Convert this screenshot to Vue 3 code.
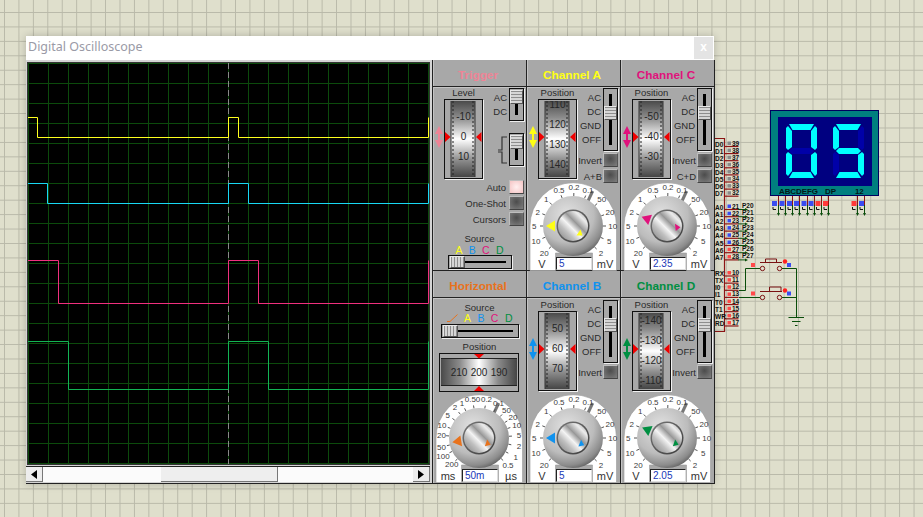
<script setup>
// dial scales, positions are measured from the top left of the dial
const voltScale = [
  ['20', 15.3, 70], ['10', 7, 58], ['5', 5.3, 43], ['2', 8.7, 29], ['1', 17.3, 16],
  ['0.5', 30, 7], ['0.2', 45, 4.3], ['0.1', 59, 7], ['50', 72.7, 16.3], ['20', 81, 29.7],
  ['10', 83.7, 43], ['5', 80.3, 58], ['2', 72, 70.3]
]
const timeScale = [
  ['200', 16.7, 69.5], ['100', 8, 61], ['50', 6.4, 52], ['20', 6.4, 40.4], ['10', 7, 30.4],
  ['5', 12.7, 20], ['2', 20, 12.5], ['1', 27, 8], ['0.50', 37.5, 4.5], ['0.2', 51.5, 4.5],
  ['0.1', 63.5, 8.5], ['50', 71.5, 15], ['20', 78, 22.5], ['10', 81.7, 30.4], ['5', 84, 40.7],
  ['2', 84, 51.4], ['1', 80.7, 62], ['0.5', 73, 70]
]

function ticks(scale) {
  return scale.map(([, x, y]) => {
    const a = Math.atan2(y - 43, x - 44)
    return {
      x1: 44 + Math.cos(a) * 30, y1: 43 + Math.sin(a) * 30,
      x2: 44 + Math.cos(a) * 33, y2: 43 + Math.sin(a) * 33
    }
  })
}

const panels = [
  { kind: 'trigger', title: 'Trigger', color: '#ee8496', label: 'Level',
    wheel: [['-10', 17], ['0', 37.7], ['10', 57]] },
  { kind: 'channel', title: 'Channel A', color: '#ffff14', label: 'Position', extra: 'A+B',
    wheel: [['110', 5.7], ['120', 25.7], ['130', 45.7], ['140', 65.7]],
    big: 0, small: 0, value: '5', scale: voltScale, left: 'V', right: 'mV' },
  { kind: 'channel', title: 'Channel C', color: '#e0127c', label: 'Position', extra: 'C+D',
    wheel: [['-50', 17], ['-40', 37.7], ['-30', 57]],
    big: 20, small: -40, value: '2.35', scale: voltScale, left: 'V', right: 'mV' },
  { kind: 'horizontal', title: 'Horizontal', color: '#e8721c',
    big: -9, small: -15, value: '50m', scale: timeScale, left: 'ms', right: 'µs' },
  { kind: 'channel', low: true, title: 'Channel B', color: '#1092ee', label: 'Position',
    wheel: [['50', 17], ['60', 37.7], ['70', 57]],
    big: 0, small: -12, value: '5', scale: voltScale, left: 'V', right: 'mV' },
  { kind: 'channel', low: true, title: 'Channel D', color: '#008f42', label: 'Position',
    wheel: [['-140', 9.3], ['-130', 29], ['-120', 49], ['-110', 69]],
    big: 23, small: -15, value: '2.05', scale: voltScale, left: 'V', right: 'mV' }
]

const wheelTicks = [...Array(19).keys()].map((n) => 3 + n * 4)

const gridX = [...Array(21).keys()].map((n) => n * 20 + 0.5)
const gridY = gridX

const traces = [
  { color: '#ffff1e', d: 'M0 54.5H9.5V74.5H200.5V54.5H210.5V74.5H400.5V54.5' },
  { color: '#18d8f4', d: 'M0 120.5H19.5V140.5H200.5V120.5H220.5V140.5H400.5V120.5' },
  { color: '#f0307e', d: 'M0 197.5H30.5V240.5H200.5V197.5H230.5V240.5H400.5V197.5' },
  { color: '#12b454', d: 'M0 278.5H40.5V326.5H200.5V278.5H240.5V326.5H400.5V278.5' }
]

// seven segment display
const SEGS = {
  a: '3,0 28,0 24.5,6 6.5,6',
  b: '25,7 29,2 31,4 31,24 29,26 25,23',
  c: '25,31 29,28 31,30 31,50 29,52 25,47',
  d: '6.5,48 24.5,48 28,54 3,54',
  e: '0,30 2,28 6,31 6,47 2,52 0,50',
  f: '0,4 2,2 6,7 6,23 2,26 0,24',
  g: '6,24 25,24 28,27 25,30 6,30 3,27'
}
const digits = [
  { x: 786, on: 'abcdef' },
  { x: 833, on: 'acdfg' }
]
const displayPins = [
  { x: 778.5, sq: 772, c: '#3a4cf0' }, { x: 785.5, sq: 779.5, c: '#3a4cf0' },
  { x: 792.5, sq: 787, c: '#3a4cf0' }, { x: 799.5, sq: 794, c: '#3a4cf0' },
  { x: 807.5, sq: 801.5, c: '#3a4cf0' }, { x: 814.5, sq: 808.5, c: '#3a4cf0' },
  { x: 821.5, sq: 815.5, c: '#ff3a3a' }, { x: 828.5, sq: 823, c: '#ff3a3a' },
  { x: 857.5, sq: 851.5, c: '#ff3a3a' }, { x: 864.5, sq: 859, c: '#3a4cf0' }
]

const portD = ['D0', 'D1', 'D2', 'D3', 'D4', 'D5', 'D6', 'D7'].map((name, i) => ({
  name, y: 146.5 + i * 7.1, num: String(39 - i), c: '#8a8a8a'
}))
const portA = [...Array(8).keys()].map((i) => ({
  name: 'A' + i, y: 209.5 + i * 7.2, num: String(21 + i), net: 'P2' + i,
  c: i < 6 ? '#3a4cf0' : '#ff4a4a'
}))
const portB = ['RX', 'TX', 'I0', 'I1', 'T0', 'T1', 'WR', 'RD'].map((name, i) => ({
  name, y: 276 + i * 7.14, num: String(10 + i), c: '#ff4a4a'
}))
const pins = [...portD, ...portA, ...portB]
</script>

<template>
  <div class="canvas">
    <svg class="defs" width="0" height="0">
      <defs>
        <linearGradient id="wheelV" x1="0" y1="0" x2="0" y2="1">
          <stop offset="0" stop-color="#4a4a4a" />
          <stop offset="0.22" stop-color="#8c8c8c" />
          <stop offset="0.5" stop-color="#ffffff" />
          <stop offset="0.78" stop-color="#8c8c8c" />
          <stop offset="1" stop-color="#454545" />
        </linearGradient>
        <linearGradient id="wheelH" x1="0" y1="0" x2="1" y2="0">
          <stop offset="0" stop-color="#4a4a4a" />
          <stop offset="0.25" stop-color="#8c8c8c" />
          <stop offset="0.5" stop-color="#ffffff" />
          <stop offset="0.75" stop-color="#8c8c8c" />
          <stop offset="1" stop-color="#454545" />
        </linearGradient>
        <radialGradient id="knob" cx="0.4" cy="0.32" r="0.72">
          <stop offset="0" stop-color="#e2e2e2" />
          <stop offset="0.62" stop-color="#bcbcbc" />
          <stop offset="0.88" stop-color="#8c8c8c" />
          <stop offset="1" stop-color="#606060" />
        </radialGradient>
        <linearGradient id="cap" x1="0" y1="1" x2="1" y2="0">
          <stop offset="0" stop-color="#7c7c7c" />
          <stop offset="0.3" stop-color="#c0c0c0" />
          <stop offset="0.45" stop-color="#f4f4f4" />
          <stop offset="0.6" stop-color="#989898" />
          <stop offset="0.78" stop-color="#ececec" />
          <stop offset="1" stop-color="#8a8a8a" />
        </linearGradient>
        <linearGradient id="ring" x1="0" y1="0" x2="1" y2="1">
          <stop offset="0" stop-color="#777" />
          <stop offset="1" stop-color="#3c3c3c" />
        </linearGradient>
      </defs>
    </svg>

    <!-- schematic around the instrument -->
    <svg class="schematic" viewBox="714 100 209 240" width="209" height="240">
      <path d="M714 138.5H724.5V331.5H714" fill="none" stroke="#8c1414" stroke-width="1.2" />
      <g v-for="p in pins" :key="p.num">
        <path :d="`M724 ${p.y}H738.5`" stroke="#8c1414" stroke-width="1.2" />
        <rect x="727.5" :y="p.y - 5" width="3.5" height="3.5" :fill="p.c" />
        <text class="pin" x="732" :y="p.y - 1">{{ p.num }}</text>
        <text class="pin" x="715" :y="p.y">{{ p.name }}</text>
        <template v-if="p.net">
          <path :d="`M738 ${p.y}H746`" stroke="#0a4d0a" />
          <path :d="`M745 ${p.y - 1.5}L748 ${p.y}L745 ${p.y + 1.5}Z`" fill="#0a4d0a" />
          <text class="pin" x="742" :y="p.y - 1.5">{{ p.net }}</text>
        </template>
      </g>

      <!-- push buttons and ground -->
      <g fill="none" stroke="#0a4d0a" stroke-width="1">
        <path d="M739 290.5H745.5V268.5H760" />
        <path d="M739 297.5H760" />
        <path d="M782 268.5H796.5V317.5" />
        <path d="M782 297.5H797" />
        <path d="M788.5 317.5H804M792 321.5H800.5M795 325.5H797.5" stroke-width="1.2" />
      </g>
      <g fill="none" stroke="#7a1212" stroke-width="1">
        <circle cx="762.5" cy="268.5" r="2.2" />
        <circle cx="779.5" cy="268.5" r="2.2" />
        <circle cx="762.5" cy="297.5" r="2.2" />
        <circle cx="779.5" cy="297.5" r="2.2" />
        <path d="M760 262.5H782M765.5 262.5V259H776.5V262.5" />
        <path d="M760 291.5H782M769.5 291.5V287H781V291.5" />
      </g>
      <rect x="751" y="263" width="4" height="4" fill="#ff4a4a" />
      <rect x="751" y="291.5" width="4" height="4" fill="#ff4a4a" />
      <circle cx="785" cy="261.5" r="2.2" fill="#ff2020" />
      <circle cx="785" cy="290.5" r="2.2" fill="#ff2020" />
      <rect x="787" y="263" width="4" height="4" fill="#3a4cf0" />
      <rect x="787" y="291.5" width="4" height="4" fill="#3a4cf0" />

      <!-- 7 segment display -->
      <rect x="770.5" y="110.5" width="108" height="85" fill="#007f7f" stroke="#000060" />
      <rect x="778" y="117" width="94" height="69" fill="#000080" />
      <g v-for="d in digits" :key="d.x" :transform="`translate(${d.x} 124)`">
        <polygon
          v-for="(pts, name) in SEGS"
          :key="name"
          :points="pts"
          :fill="d.on.includes(name) ? '#00ffff' : '#0000a8'"
        />
      </g>
      <text class="seg-label" x="779" y="194">ABCDEFG</text>
      <text class="seg-label" x="825" y="194">DP</text>
      <text class="seg-label" x="855" y="194">12</text>
      <g v-for="p in displayPins" :key="p.x">
        <path :d="`M${p.x} 196V205`" stroke="#8c1414" />
        <path :d="`M${p.x} 205V214`" stroke="#0a4d0a" />
        <path :d="`M${p.x - 1.5} 213L${p.x} 216L${p.x + 1.5} 213Z`" fill="#0a4d0a" />
        <rect :x="p.sq" y="201" width="5" height="5" :fill="p.c" />
        <path :d="`M${p.sq + 1} 207V209.5H${p.sq + 4}`" fill="none" stroke="#111" />
      </g>
    </svg>

    <div class="window">
      <div class="titlebar">
        <span class="title">Digital Oscilloscope</span>
        <span class="close">x</span>
      </div>
      <div class="window-body">
        <div class="scope">
          <svg class="screen" width="401" height="401" viewBox="0 0 401 401">
            <rect width="401" height="401" fill="#000" />
            <path v-for="x in gridX" :key="'v' + x" :d="`M${x} 0V401`" stroke="#0c4a0c" />
            <path v-for="y in gridY" :key="'h' + y" :d="`M0 ${y}H401`" stroke="#0c4a0c" />
            <path d="M200.5 0V401" stroke="#8a8a8a" stroke-dasharray="6 3" />
            <path
              v-for="t in traces"
              :key="t.color"
              :d="t.d"
              fill="none"
              :stroke="t.color"
            />
          </svg>
          <div class="scrollbar">
            <div class="scroll-btn">
              <svg width="6" height="9"><path d="M6 0V9L0 4.5Z" fill="#000" /></svg>
            </div>
            <div class="scroll-track">
              <div class="scroll-thumb"></div>
            </div>
            <div class="scroll-btn">
              <svg width="6" height="9"><path d="M0 0V9L6 4.5Z" fill="#000" /></svg>
            </div>
          </div>
        </div>

        <div class="panels">
          <section v-for="p in panels" :key="p.title" class="panel" :class="{ low: p.low }">
            <header class="panel-title" :style="{ color: p.color }">{{ p.title }}</header>
            <div class="panel-body">
              <div v-if="p.kind !== 'horizontal'" class="top-row">
                <div class="arrow-col">
                  <svg width="8" height="22" viewBox="0 0 8 22">
                    <path d="M4 0L8 8H5V14H8L4 22L0 14H3V8H0Z" :fill="p.color" />
                  </svg>
                </div>
                <div class="wheel-col">
                  <div class="cap">{{ p.label }}</div>
                  <svg class="wheel" width="40" height="81" viewBox="0 0 40 81">
                    <rect x="1.5" y="1.5" width="38" height="79" fill="none" stroke="#f2f2f2" />
                    <rect x="0.5" y="0.5" width="38" height="79" fill="#a8a8a8" stroke="#111" />
                    <rect x="7" y="2" width="24" height="76" fill="url(#wheelV)" />
                    <path d="M7 2V78M31 2V78" stroke="#333" />
                    <g stroke="#222">
                      <path v-for="y in wheelTicks" :key="y" :d="`M8 ${y}H10M28 ${y}H30`" />
                    </g>
                    <svg x="7" y="2" width="24" height="76" viewBox="7 2 24 76">
                      <text
                        v-for="w in p.wheel"
                        :key="w[0]"
                        class="wheel-text"
                        x="19.5"
                        :y="w[1]"
                      >{{ w[0] }}</text>
                    </svg>
                    <path d="M1 33V43L6.5 38Z M37.5 33V43L32 38Z" fill="#f00000" />
                  </svg>
                </div>

                <div v-if="p.kind === 'trigger'" class="right-col">
                  <div class="switch-row">
                    <div class="sw-labels">
                      <span>AC</span>
                      <span>DC</span>
                    </div>
                    <div class="vslider"><i class="track"></i><i class="thumb"></i></div>
                  </div>
                  <div class="switch-row edge-row">
                    <div class="sw-labels">
                      <svg width="10" height="28" viewBox="0 0 10 28">
                        <path
                          d="M1 14H5V1H10M1 16H5V27H10"
                          fill="none"
                          stroke="#333"
                          stroke-width="1.2"
                        />
                      </svg>
                    </div>
                    <div class="vslider"><i class="track"></i><i class="thumb"></i></div>
                  </div>
                </div>

                <div v-else class="right-col">
                  <div class="switch-row">
                    <div class="sw-labels">
                      <span>AC</span>
                      <span>DC</span>
                      <span>GND</span>
                      <span>OFF</span>
                    </div>
                    <div class="vslider tall"><i class="track"></i><i class="thumb"></i></div>
                  </div>
                  <div class="btn-row">
                    <span>Invert</span>
                    <button class="btn"></button>
                  </div>
                  <div v-if="p.extra" class="btn-row">
                    <span>{{ p.extra }}</span>
                    <button class="btn"></button>
                  </div>
                </div>
              </div>

              <div v-if="p.kind === 'trigger'" class="trigger-bottom">
                <div class="btn-row">
                  <span>Auto</span>
                  <button class="btn on"></button>
                </div>
                <div class="btn-row">
                  <span>One-Shot</span>
                  <button class="btn"></button>
                </div>
                <div class="btn-row">
                  <span>Cursors</span>
                  <button class="btn"></button>
                </div>
                <div class="source">
                  <div class="cap">Source</div>
                  <div class="letters">
                    <b class="a">A</b><b class="b">B</b><b class="c">C</b><b class="d">D</b>
                  </div>
                  <div class="hslider"><i class="track"></i><i class="thumb"></i></div>
                </div>
              </div>

              <div v-if="p.kind === 'horizontal'" class="hor-top">
                <div class="cap">Source</div>
                <div class="letters wide">
                  <svg width="11" height="8" viewBox="0 0 11 8">
                    <path d="M0 7.5H3L10.5 0.5" fill="none" stroke="#e8721c" />
                  </svg>
                  <b class="a">A</b><b class="b">B</b><b class="c">C</b><b class="d">D</b>
                </div>
                <div class="hslider wide"><i class="track"></i><i class="thumb"></i></div>
                <div class="cap hor-cap">Position</div>
                <svg class="wheel" width="81" height="40" viewBox="0 0 81 40">
                  <rect x="0.5" y="0.5" width="79" height="38" fill="#a8a8a8" stroke="#111" />
                  <rect x="2" y="6" width="76" height="26" fill="url(#wheelH)" />
                  <path d="M2 5.5H78M2 32.5H78" stroke="#222" />
                  <text class="wheel-text" x="20" y="19.5">210</text>
                  <text class="wheel-text" x="40" y="19.5">200</text>
                  <text class="wheel-text" x="60" y="19.5">190</text>
                  <path d="M35 1H45L40 5.5Z M35 38H45L40 33Z" fill="#f00000" />
                </svg>
              </div>

              <div v-if="p.kind !== 'trigger'" class="dial">
                <svg width="90" height="88" viewBox="0 0 90 88">
                  <path
                    d="M1 87.5V43A43 43 0 0 1 87.5 43V87.5H63.5V70H26.5V87.5Z"
                    fill="#fff"
                    stroke="#999"
                    stroke-width="0.6"
                  />
                  <path d="M63.7 8L59 18" stroke="#777" stroke-width="3" />
                  <text
                    v-for="(s, i) in p.scale"
                    :key="i"
                    class="dial-text"
                    :x="s[1]"
                    :y="s[2]"
                  >{{ s[0] }}</text>
                  <path
                    v-for="(t, i) in ticks(p.scale)"
                    :key="'t' + i"
                    :d="`M${t.x1} ${t.y1}L${t.x2} ${t.y2}`"
                    stroke="#555"
                  />
                  <circle cx="44" cy="43" r="30" fill="url(#knob)" />
                  <circle cx="44" cy="43" r="16.5" fill="url(#ring)" />
                  <circle cx="44" cy="43" r="15" fill="url(#cap)" />
                  <polygon
                    points="17,43 26,37.5 26,48.5"
                    :fill="p.color"
                    :transform="`rotate(${p.big} 44 43)`"
                  />
                  <polygon
                    points="47.5,52.5 53.5,52.5 51.5,46.5"
                    :fill="p.color"
                    :transform="`rotate(${p.small} 44 43)`"
                  />
                  <text class="unit" x="13" y="85">{{ p.left }}</text>
                  <text class="unit" x="76" y="85">{{ p.right }}</text>
                </svg>
                <div class="readout">{{ p.value }}</div>
              </div>
            </div>
          </section>
        </div>
      </div>
    </div>
  </div>
</template>

<style>
html,
body {
  margin: 0;
  background: #dfdfcc;
}
</style>

<style scoped>
.canvas {
  position: relative;
  width: 923px;
  height: 517px;
  overflow: hidden;
  background-color: #dfdfcc;
  background-image:
    linear-gradient(to right, #b9b9a9 1px, transparent 1px),
    linear-gradient(to bottom, #b9b9a9 1px, transparent 1px);
  background-size: 14.44px 14.44px;
  background-position: 4px 12px;
  font-family: "Liberation Sans", Arial, sans-serif;
}

.defs {
  position: absolute;
}

.schematic {
  position: absolute;
  left: 714px;
  top: 100px;
}

.pin {
  font-size: 6.5px;
  font-weight: 700;
  fill: #111;
}

.seg-label {
  font-size: 8px;
  font-weight: 700;
  fill: #001818;
  letter-spacing: -0.1px;
}

.window {
  position: absolute;
  left: 26px;
  top: 36px;
  width: 688px;
  height: 448px;
  display: flex;
  flex-direction: column;
  background: #a8a8a8;
  box-shadow: 0 0 8px rgba(0, 0, 0, 0.22);
}

.titlebar {
  height: 24px;
  flex: none;
  display: flex;
  align-items: center;
  justify-content: space-between;
  padding-left: 2px;
  background: #fff;
}

.title {
  font-family: "Noto Sans", sans-serif;
  font-size: 12.5px;
  color: #9a9aa6;
  margin-bottom: 3px;
}

.close {
  width: 19px;
  height: 22px;
  margin-right: 1px;
  background: #e4e4e4;
  color: #fff;
  font-weight: 700;
  font-size: 12px;
  text-align: center;
  line-height: 20px;
}

.window-body {
  display: flex;
  height: 424px;
}

.scope {
  width: 406px;
  flex: none;
  box-sizing: border-box;
  padding: 3px 0 1px 2px;
  background: #d4d4d4;
  border-bottom: 1px solid #222;
  display: flex;
  flex-direction: column;
}

.screen {
  display: block;
  flex: none;
  outline: 1px solid #333;
}

.scrollbar {
  margin-top: 2px;
  margin-left: -2px;
  width: 404px;
  height: 17px;
  display: flex;
  border-top: 1px solid #222;
  background: #fff;
}

.scroll-btn {
  width: 16px;
  flex: none;
  display: flex;
  align-items: center;
  justify-content: center;
  background: #ededed;
  border-right: 1px solid #777;
  border-bottom: 1px solid #777;
}

.scroll-track {
  flex: 1;
  padding-left: 118px;
  background: #fbfbfb;
}

.scroll-thumb {
  width: 117px;
  height: 100%;
  box-sizing: border-box;
  background: #eeeeee;
  border-right: 1px solid #777;
  border-bottom: 1px solid #777;
}

.panels {
  width: 282px;
  display: grid;
  grid-template-columns: repeat(3, 94px);
  grid-template-rows: 211px 213px;
  border-right: 1px solid #222;
  box-sizing: content-box;
  margin-right: -1px;
}

.panel {
  display: flex;
  flex-direction: column;
  box-sizing: border-box;
  min-width: 0;
  border-left: 1px solid #222;
  border-bottom: 1px solid #222;
  background: #a8a8a8;
  box-shadow: inset 1px 0 #c4c4c4;
}

.panel-title {
  height: 27px;
  flex: none;
  box-sizing: border-box;
  border-bottom: 1px solid #222;
  padding-right: 3px;
  font-size: 11.8px;
  font-weight: 700;
  text-align: center;
  line-height: 30px;
}

.panel-body {
  flex: 1;
  min-height: 0;
  display: flex;
  flex-direction: column;
  padding-left: 2px;
  box-shadow: inset 0 1px #c4c4c4;
}

.low .top-row {
  padding-top: 1px;
}

.top-row {
  display: flex;
  flex: none;
}

.arrow-col {
  width: 9px;
  flex: none;
  padding-top: 39px;
}

.arrow-col svg {
  display: block;
}

.wheel-col {
  width: 39px;
  flex: none;
}

.wheel {
  display: block;
}

.cap {
  height: 12px;
  font-size: 9.5px;
  line-height: 12px;
  color: #2a2a2a;
  text-align: center;
}

.wheel-text {
  font-size: 10px;
  fill: #262626;
  text-anchor: middle;
  dominant-baseline: central;
}

.right-col {
  width: 43px;
  flex: none;
}

.switch-row {
  display: flex;
  padding-top: 1px;
}

.edge-row {
  margin-top: 11px;
}

.sw-labels {
  width: 26px;
  flex: none;
  box-sizing: border-box;
  padding: 3px 2px 0 0;
  display: flex;
  flex-direction: column;
  align-items: flex-end;
  font-size: 9.5px;
  color: #2a2a2a;
}

.sw-labels span {
  height: 14px;
  line-height: 14px;
}

.vslider {
  position: relative;
  width: 15px;
  height: 33px;
  box-sizing: border-box;
  border: 1px solid #111;
  box-shadow: 1px 1px 0 #eee;
}

.vslider.tall {
  height: 63px;
}

.track {
  position: absolute;
  display: block;
  background: #000;
}

.vslider .track {
  left: 5px;
  top: 5px;
  bottom: 5px;
  width: 3px;
}

.thumb {
  position: absolute;
  display: block;
  box-sizing: border-box;
  border: 1px solid #e8e8e8;
  border-right-color: #555;
  border-bottom-color: #555;
}

.vslider .thumb {
  left: 0;
  top: 1px;
  width: 13px;
  height: 14px;
  background: repeating-linear-gradient(to bottom, #8e8e8e 0 1px, #d6d6d6 1px 3px);
}

.vslider.tall .thumb {
  top: 17px;
}

.btn-row {
  height: 14px;
  margin-top: 2px;
  display: flex;
  align-items: center;
  justify-content: flex-end;
  gap: 3px;
  font-size: 9.5px;
  color: #2a2a2a;
}

.right-col .btn-row {
  width: 41px;
  margin-right: 0;
  gap: 1px;
}

.btn {
  width: 15px;
  height: 14px;
  flex: none;
  padding: 0;
  border: 1px solid #bdbdbd;
  border-right-color: #555;
  border-bottom-color: #444;
  background: radial-gradient(circle at 50% 40%, #4c4c4c, #7f7f7f);
}

.btn.on {
  background: radial-gradient(circle at 50% 50%, #fff0f0, #f5c4c4);
}

.trigger-bottom {
  display: flex;
  flex-direction: column;
  padding-right: 2px;
}

.trigger-bottom .btn-row:first-child {
  margin-top: 0;
}

.source {
  margin-top: 7px;
  display: flex;
  flex-direction: column;
  align-items: center;
}

.letters {
  width: 60px;
  height: 10px;
  display: flex;
  justify-content: space-between;
  padding: 0 6px;
  box-sizing: border-box;
  font-size: 10.5px;
  line-height: 11px;
}

.letters.wide {
  width: 66px;
  padding: 0;
  align-items: center;
  margin-top: -1px;
}

.letters b {
  font-weight: 400;
}

.a {
  color: #ffff14;
}

.b {
  color: #1092ee;
}

.c {
  color: #e0127c;
}

.d {
  color: #008f42;
}

.hslider {
  position: relative;
  width: 64px;
  height: 14px;
  box-sizing: border-box;
  border: 1px solid #111;
  box-shadow: 1px 1px 0 #eee;
}

.hslider.wide {
  width: 78px;
}

.hslider .track {
  left: 5px;
  right: 5px;
  top: 5px;
  height: 2px;
}

.hslider .thumb {
  left: 1px;
  top: 0;
  width: 15px;
  height: 12px;
  background: repeating-linear-gradient(to right, #8e8e8e 0 1px, #d6d6d6 1px 3px);
}

.hor-top {
  display: flex;
  flex-direction: column;
  align-items: center;
  padding: 4px 2px 0 0;
}

.hor-top .hslider {
  margin-top: 1px;
}

.hor-cap {
  margin-top: 3px;
}

.dial {
  position: relative;
  margin-top: auto;
  width: 90px;
  height: 88px;
  flex: none;
}

.dial svg {
  display: block;
}

.dial-text {
  font-size: 8px;
  fill: #3c3c3c;
  text-anchor: middle;
  dominant-baseline: central;
}

.unit {
  font-size: 11px;
  fill: #333;
  text-anchor: middle;
}

.readout {
  position: absolute;
  left: 27px;
  top: 74px;
  width: 36px;
  height: 13px;
  box-sizing: border-box;
  border: 1px solid #222;
  border-right-color: #ddd;
  border-bottom-color: #ddd;
  padding-left: 2px;
  background: #fff;
  color: #2038b8;
  font-size: 10px;
  line-height: 11px;
}
</style>
